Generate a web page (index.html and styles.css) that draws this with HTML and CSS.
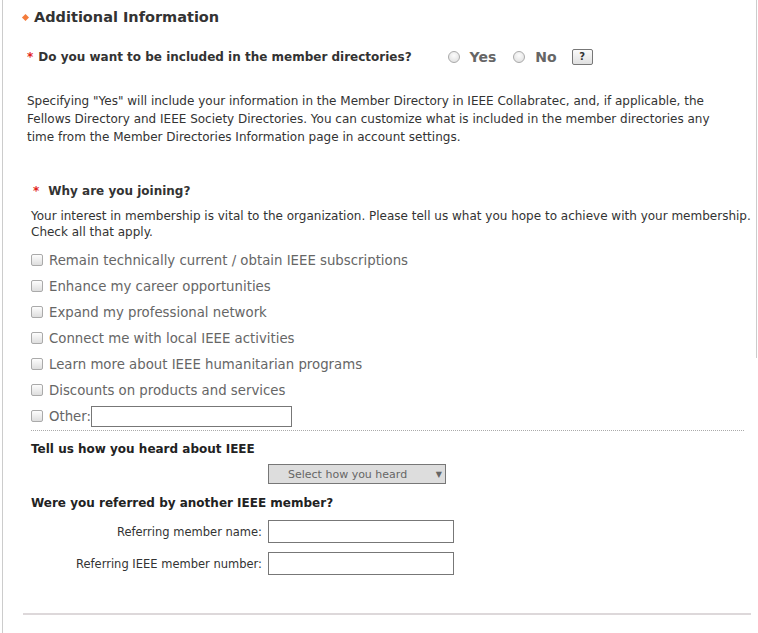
FILE: index.html
```html
<!DOCTYPE html>
<html>
<head>
<meta charset="utf-8">
<link rel="stylesheet" href="styles.css">
</head>
<body>
<div class="page">
  <div class="rline"></div>
  <h2 class="section-title"><span class="diamond"></span>Additional Information</h2>

  <div class="dir-row">
    <span class="req">*</span>
    <span class="q">Do you want to be included in the member directories?</span>
    <label class="radio"><input type="radio" name="dir"><span>Yes</span></label>
    <label class="radio last"><input type="radio" name="dir"><span>No</span></label>
    <button class="help">?</button>
  </div>

  <p class="note">Specifying "Yes" will include your information in the Member Directory in IEEE Collabratec, and, if applicable, the Fellows Directory and IEEE Society Directories. You can customize what is included in the member directories any time from the Member Directories Information page in account settings.</p>

  <div class="join-title"><span class="req">*</span><span class="q">Why are you joining?</span></div>
  <p class="interest">Your interest in membership is vital to the organization. Please tell us what you hope to achieve with your membership. Check all that apply.</p>

  <ul class="checks">
    <li><label><input type="checkbox"><span>Remain technically current / obtain IEEE subscriptions</span></label></li>
    <li><label><input type="checkbox"><span>Enhance my career opportunities</span></label></li>
    <li><label><input type="checkbox"><span>Expand my professional network</span></label></li>
    <li><label><input type="checkbox"><span>Connect me with local IEEE activities</span></label></li>
    <li><label><input type="checkbox"><span>Learn more about IEEE humanitarian programs</span></label></li>
    <li><label><input type="checkbox"><span>Discounts on products and services</span></label></li>
    <li><label><input type="checkbox"><span>Other:</span></label><input type="text" class="other"></li>
  </ul>

  <div class="dotted"></div>

  <div class="sub">Tell us how you heard about IEEE</div>
  <div class="select-row">
    <div class="select"><span>Select how you heard</span><span class="arrow">▼</span></div>
  </div>

  <div class="sub ref">Were you referred by another IEEE member?</div>
  <div class="field"><span class="flabel">Referring member name:</span><input type="text" class="finput"></div>
  <div class="field second"><span class="flabel">Referring IEEE member number:</span><input type="text" class="finput"></div>

  <div class="bottom-rule"></div>
</div>
</body>
</html>
```

FILE: styles.css
```css
html, body {
  margin: 0;
  padding: 0;
  background: #fff;
}
body {
  font-family: "DejaVu Sans", Verdana, sans-serif;
  color: #333;
  font-size: 12px;
}
.page {
  position: relative;
  margin-left: 2px;
  border-left: 1px solid #ccc;
  height: 633px;
  box-sizing: border-box;
  padding-top: 6px;
}
.rline {
  position: absolute;
  left: 753px;
  top: 0;
  width: 1px;
  height: 358px;
  background: #ccc;
}
.section-title {
  margin: 0 0 0 18px;
  font-size: 14.5px;
  font-weight: bold;
  color: #333;
  display: flex;
  align-items: center;
  height: 22px;
}
.diamond {
  width: 5px;
  height: 5px;
  background: #f47c3c;
  transform: rotate(45deg);
  margin-right: 6px;
  margin-left: 2px;
}
.dir-row {
  display: flex;
  align-items: center;
  margin: 19px 0 0 24px;
  height: 20px;
}
.req {
  color: #e2231a;
  font-weight: bold;
  font-size: 12px;
  margin-right: 5px;
}
.q {
  font-weight: bold;
  font-size: 12px;
  color: #333;
}
.dir-row .q { margin-right: 36px; }
.radio {
  display: flex;
  align-items: center;
  font-weight: bold;
  font-size: 14px;
  color: #666;
  margin-right: 17px;
}
.radio.last { margin-right: 15px; }
input[type=radio] {
  -webkit-appearance: none;
  appearance: none;
  margin: 0 10px 0 0;
  width: 12px;
  height: 12px;
  border-radius: 50%;
  border: 1px solid #aaa;
  background: radial-gradient(circle at 50% 35%, #fcfcfc, #dcdcdc);
  box-sizing: border-box;
}
.help {
  width: 21px;
  height: 16px;
  padding: 0;
  font-size: 10px;
  font-weight: bold;
  font-family: "DejaVu Sans", sans-serif;
  color: #333;
  background: linear-gradient(#fafafa, #e0e0e0);
  border: 1px solid #777;
  border-radius: 2px;
  line-height: 14px;
}
.note {
  margin: 25px 30px 0 24px;
  line-height: 18px;
  font-size: 12px;
  color: #333;
}
.join-title {
  margin: 38px 0 0 30px;
  display: flex;
  align-items: center;
}
.join-title .req { margin-right: 9px; }
.interest {
  margin: 10px 0 0 28px;
  line-height: 16px;
  color: #333;
}
.checks {
  list-style: none;
  margin: 7px 0 0 28px;
  padding: 0;
}
.checks li {
  height: 26px;
  display: flex;
  align-items: center;
}
.checks label {
  display: flex;
  align-items: center;
  font-size: 13.3px;
  color: #666;
}
input[type=checkbox] {
  -webkit-appearance: none;
  appearance: none;
  margin: 0 6px 0 0;
  width: 12px;
  height: 12px;
  border: 1px solid #aaa;
  border-radius: 2px;
  background: linear-gradient(#fdfdfd, #dedede);
  box-sizing: border-box;
}
.other {
  width: 201px;
  height: 21px;
  box-sizing: border-box;
  border: 1px solid #777;
  margin: 0;
  padding: 0;
}
.dotted {
  margin: 1px 14px 0 28px;
  border-top: 1px dotted #aaa;
}
.sub {
  margin: 11px 0 0 28px;
  font-weight: bold;
  font-size: 12px;
  color: #222;
}
.select-row {
  margin: 8px 0 0 265px;
}
.select {
  width: 178px;
  height: 20px;
  box-sizing: border-box;
  border: 1px solid #777;
  background: #ddd;
  color: #666;
  font-size: 11px;
  display: flex;
  align-items: center;
  justify-content: space-between;
  padding: 0 3px 0 19px;
}
.arrow { font-size: 8px; color: #666; }
.sub.ref { margin-top: 12px; }
.field {
  display: flex;
  align-items: center;
  margin-top: 10px;
}
.field.second { margin-top: 9px; }
.flabel {
  width: 259px;
  text-align: right;
  color: #333;
  font-size: 11.5px;
}
.finput {
  margin: 0 0 0 6px;
  width: 186px;
  height: 23px;
  box-sizing: border-box;
  border: 1px solid #777;
  padding: 0;
}
.bottom-rule {
  margin: 38px 7px 0 20px;
  height: 2px;
  background: #ddd8da;
}
```
